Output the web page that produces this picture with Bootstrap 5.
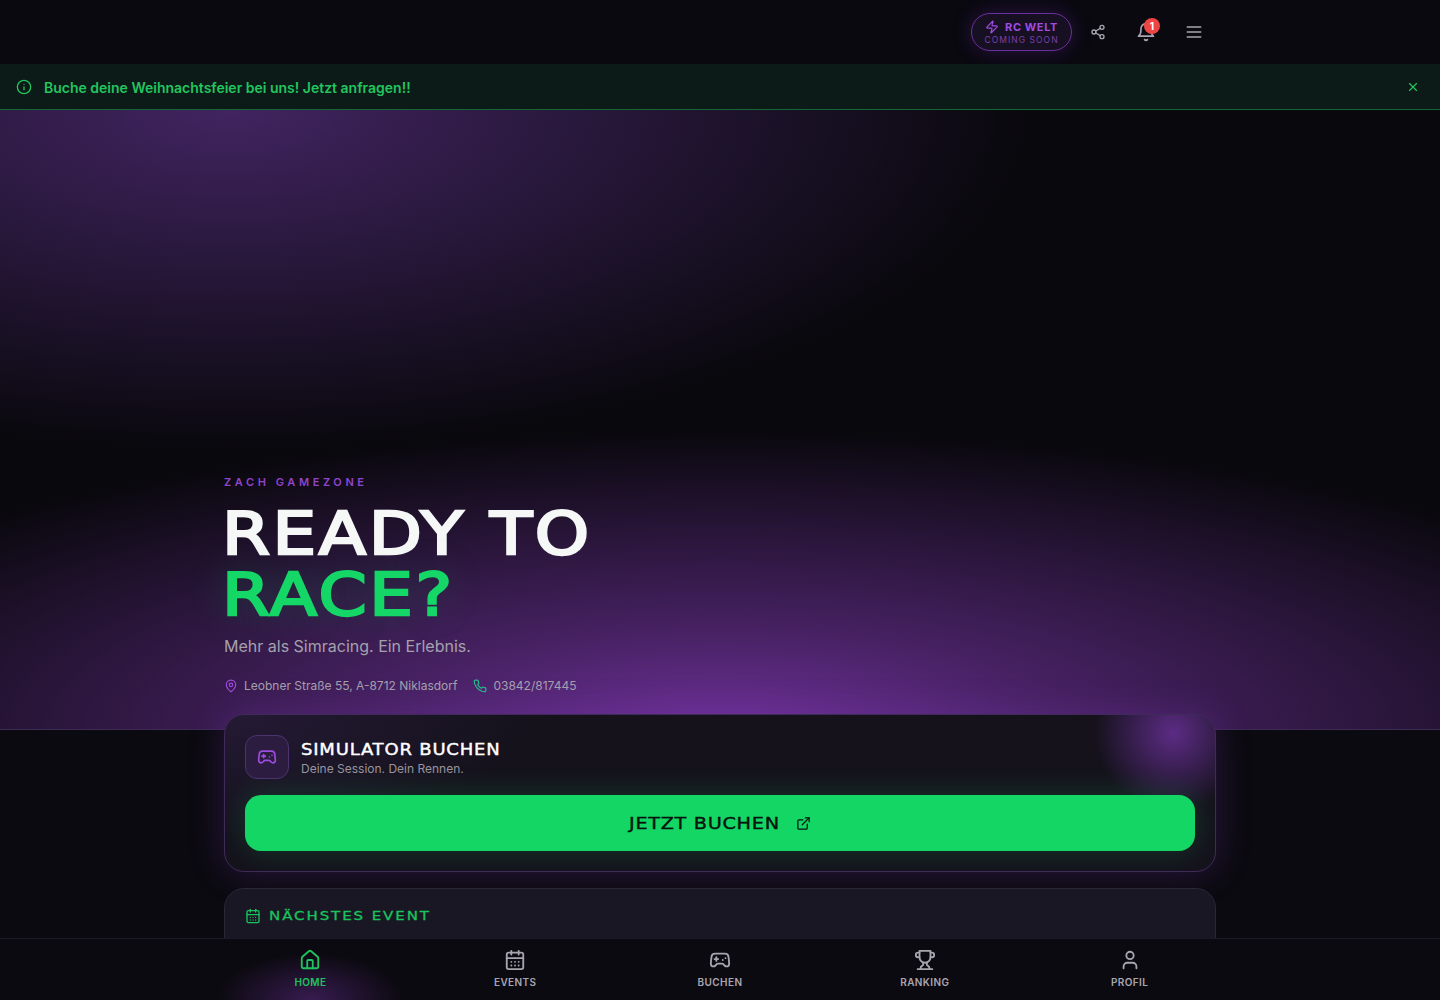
<!DOCTYPE html>
<html lang="de">
<head>
    <meta charset="UTF-8">
    <meta name="viewport" content="width=device-width, initial-scale=1.0">
    <title>Zach Gamezone</title>
    <link href="https://cdn.jsdelivr.net/npm/bootstrap@5.3.3/dist/css/bootstrap.min.css" rel="stylesheet">
    <style>
        body {
            font-family: "Inter", "Liberation Sans", sans-serif;
            background-color: #0b0a10;
            color: #fff;
            height: 100vh;
            overflow: hidden;
        }
        .ico {
            fill: none;
            stroke: currentColor;
            stroke-width: 2;
            stroke-linecap: round;
            stroke-linejoin: round;
            flex-shrink: 0;
        }
        /* wide techno look: no such font here, so DejaVu gets stretched */
        .display-face {
            font-family: "DejaVu Sans", "Liberation Sans", sans-serif;
            font-weight: 400;
            transform-origin: left center;
        }
        .wrap {
            width: 992px;
            margin: 0 auto;
        }
        .top-bar {
            height: 64px;
            background-color: #09090f;
        }
        .rc-pill {
            width: 101px;
            height: 38px;
            margin-right: 6px;
            padding-top: 1px;
            border: 1px solid #6a2f9c;
            border-radius: 19px;
            background-color: #171023;
            box-shadow: 0 0 20px rgba(147, 51, 234, .25);
            line-height: 1;
        }
        .rc-head {
            gap: 6px;
        }
        .rc-zap {
            color: #a04be0;
        }
        .rc-title {
            color: #a04be0;
            font-size: 11px;
            font-weight: 700;
            letter-spacing: .6px;
        }
        .rc-sub {
            color: #7b41ad;
            font-size: 8.5px;
            letter-spacing: 1.05px;
            margin-top: 2px;
        }
        .top-btn {
            width: 40px;
            height: 40px;
            color: #a8a5b0;
            background: none;
            border: 0;
            padding: 0;
        }
        .top-actions {
            padding-right: 2px;
        }
        .bell-count {
            top: 6px;
            right: 6px;
            width: 16px;
            height: 16px;
            font-size: 10px;
            font-weight: 700;
            line-height: 16px;
            background-color: #ef4444;
            color: #fff;
            border-radius: 50%;
            text-align: center;
        }
        .promo-bar {
            height: 46px;
            padding: 0 16px;
            background-color: #0c1a18;
            border-bottom: 1px solid #166534;
            color: #22c55e;
            font-size: 14px;
            font-weight: 600;
        }
        .promo-lead {
            gap: 12px;
        }
        .promo-text {
            padding-top: 1px;
        }
        .promo-close {
            background: none;
            border: 0;
            padding: 0;
            color: #22c55e;
            margin-right: 4px;
        }
        .page-body {
            min-height: 0;
            overflow: hidden;
        }
        .hero-zone {
            height: 620px;
            padding-bottom: 34px;
            background:
                radial-gradient(ellipse 800px 340px at 230px 0, #412460 0%, rgba(65, 36, 96, .6) 40%, rgba(65, 36, 96, 0) 100%),
                radial-gradient(ellipse 1050px 300px at 720px 620px, #6d3198 0%, rgba(109, 49, 152, .6) 35%, rgba(109, 49, 152, 0) 100%),
                #09080d;
            border-bottom: 1px solid #3d2a55;
        }
        .hero-eyebrow {
            color: #8f44cc;
            font-size: 11px;
            font-weight: 600;
            letter-spacing: 3.6px;
            line-height: 14px;
            margin-bottom: 15px;
        }
        .hero-title {
            font-size: 58px;
            line-height: 61px;
            letter-spacing: 2.2px;
            margin: 0 0 8px -2px;
            color: #f6f8f7;
            -webkit-text-stroke: 2.4px currentColor;
            transform: scaleX(1.19);
        }
        .hero-title span {
            display: block;
            color: #15d767;
            text-shadow: 0 0 36px rgba(21, 215, 103, .28);
        }
        .hero-lead {
            color: #a5a1ae;
            font-size: 16px;
            line-height: 24px;
            margin-bottom: 19px;
        }
        .hero-meta {
            color: #a5a1ae;
            font-size: 12px;
            line-height: 18px;
        }
        .meta-item {
            gap: 6px;
        }
        .meta-list {
            gap: 16px;
        }
        .pin-ico {
            color: #a04be0;
        }
        .phone-ico {
            color: #22c08a;
        }
        .booking-card {
            height: 158px;
            margin-top: -16px;
            padding: 20px;
            border: 1px solid #3f2b59;
            border-radius: 20px;
            background-color: #15121c;
            background-image:
                radial-gradient(circle 78px at 948px 18px, rgba(116, 52, 168, .75), rgba(116, 52, 168, 0)),
                radial-gradient(ellipse 300px 120px at 0 0, rgba(60, 38, 90, .4), rgba(60, 38, 90, 0));
            box-shadow: 0 0 34px rgba(116, 52, 168, .32);
            overflow: hidden;
        }
        .icon-tile {
            width: 44px;
            height: 44px;
            border: 1px solid #4c3470;
            border-radius: 12px;
            background-color: #2b1c40;
            color: #9d4ce0;
        }
        .tile-text {
            padding-top: 4px;
        }
        .booking-title {
            font-size: 15px;
            letter-spacing: .67px;
            line-height: 20px;
            color: #fff;
            -webkit-text-stroke: .4px currentColor;
            transform: scaleX(1.2);
            white-space: nowrap;
        }
        .booking-sub {
            color: #98949f;
            font-size: 12px;
            line-height: 18px;
        }
        .book-btn {
            height: 56px;
            border: 0;
            border-radius: 16px;
            background-color: #13d664;
            color: #07140c;
            box-shadow: 0 0 30px rgba(20, 215, 101, .2);
            gap: 17px;
        }
        .book-label {
            display: inline-block;
            font-size: 16px;
            letter-spacing: .6px;
            padding-top: 2px;
            -webkit-text-stroke: .4px currentColor;
            transform: scaleX(1.2);
            margin-right: 25px;
        }
        .event-card {
            height: 100px;
            margin-top: 16px;
            padding: 18px 20px;
            border: 1px solid #2b2638;
            border-radius: 20px;
            background-color: #1a1724;
            color: #18c45e;
        }
        .event-label {
            display: inline-block;
            font-size: 12.5px;
            letter-spacing: 1.6px;
            -webkit-text-stroke: .3px currentColor;
            transform: scaleX(1.2);
            white-space: nowrap;
        }
        .bottom-bar {
            height: 62px;
            background-color: #0c0a11;
            border-top: 1px solid #1c1a26;
        }
        .bottom-grid {
            width: 1024px;
            margin: 0 auto;
        }
        .tab-link {
            flex: 1 1 0;
            color: #a8a5b0;
            font-size: 10px;
            font-weight: 600;
            letter-spacing: .4px;
            text-decoration: none;
            padding-top: 10px;
        }
        .tab-link.is-active {
            color: #1fc45f;
            background: radial-gradient(ellipse 92px 46px at 50% 100%, rgba(116, 52, 168, .42), rgba(116, 52, 168, 0));
        }
        .tab-link span {
            margin-top: 4px;
        }
    </style>
</head>
<body class="d-flex flex-column">
    <svg width="0" height="0" class="position-absolute">
        <symbol id="i-zap" viewBox="0 0 24 24"><path d="M4 14a1 1 0 0 1-.78-1.63l9.9-10.2a.5.5 0 0 1 .86.46l-1.92 6.02A1 1 0 0 0 13 10h7a1 1 0 0 1 .78 1.63l-9.9 10.2a.5.5 0 0 1-.86-.46l1.92-6.02A1 1 0 0 0 11 14z"/></symbol>
        <symbol id="i-share" viewBox="0 0 24 24"><circle cx="18" cy="5" r="3"/><circle cx="6" cy="12" r="3"/><circle cx="18" cy="19" r="3"/><line x1="8.59" x2="15.42" y1="13.51" y2="17.49"/><line x1="15.41" x2="8.59" y1="6.51" y2="10.49"/></symbol>
        <symbol id="i-bell" viewBox="0 0 24 24"><path d="M6 8a6 6 0 0 1 12 0c0 7 3 9 3 9H3s3-2 3-9"/><path d="M10.3 21a1.94 1.94 0 0 0 3.4 0"/></symbol>
        <symbol id="i-menu" viewBox="0 0 24 24"><line x1="4" x2="20" y1="12" y2="12"/><line x1="4" x2="20" y1="6" y2="6"/><line x1="4" x2="20" y1="18" y2="18"/></symbol>
        <symbol id="i-info" viewBox="0 0 24 24"><circle cx="12" cy="12" r="10"/><path d="M12 16v-4"/><path d="M12 8h.01"/></symbol>
        <symbol id="i-x" viewBox="0 0 24 24"><path d="M18 6 6 18"/><path d="m6 6 12 12"/></symbol>
        <symbol id="i-pin" viewBox="0 0 24 24"><path d="M20 10c0 6-8 12-8 12s-8-6-8-12a8 8 0 0 1 16 0Z"/><circle cx="12" cy="10" r="3"/></symbol>
        <symbol id="i-phone" viewBox="0 0 24 24"><path d="M22 16.92v3a2 2 0 0 1-2.18 2 19.79 19.79 0 0 1-8.63-3.07 19.5 19.5 0 0 1-6-6 19.79 19.79 0 0 1-3.07-8.67A2 2 0 0 1 4.11 2h3a2 2 0 0 1 2 1.72 12.84 12.84 0 0 0 .7 2.81 2 2 0 0 1-.45 2.11L8.09 9.91a16 16 0 0 0 6 6l1.27-1.27a2 2 0 0 1 2.11-.45 12.84 12.84 0 0 0 2.81.7A2 2 0 0 1 22 16.92z"/></symbol>
        <symbol id="i-pad" viewBox="0 0 24 24"><line x1="6" x2="10" y1="11" y2="11"/><line x1="8" x2="8" y1="9" y2="13"/><line x1="15" x2="15.01" y1="12" y2="12"/><line x1="18" x2="18.01" y1="10" y2="10"/><path d="M17.32 5H6.68a4 4 0 0 0-3.978 3.59c-.006.052-.01.101-.017.152C2.604 9.416 2 14.456 2 16a3 3 0 0 0 3 3c1 0 1.5-.5 2-1l1.414-1.414A2 2 0 0 1 9.828 16h4.344a2 2 0 0 1 1.414.586L17 18c.5.5 1 1 2 1a3 3 0 0 0 3-3c0-1.545-.604-6.584-.685-7.258-.007-.05-.011-.1-.017-.151A4 4 0 0 0 17.32 5z"/></symbol>
        <symbol id="i-ext" viewBox="0 0 24 24"><path d="M15 3h6v6"/><path d="M10 14 21 3"/><path d="M18 13v6a2 2 0 0 1-2 2H5a2 2 0 0 1-2-2V8a2 2 0 0 1 2-2h6"/></symbol>
        <symbol id="i-cal" viewBox="0 0 24 24"><path d="M8 2v4"/><path d="M16 2v4"/><rect width="18" height="18" x="3" y="4" rx="2"/><path d="M3 10h18"/><path d="M8 14h.01"/><path d="M12 14h.01"/><path d="M16 14h.01"/><path d="M8 18h.01"/><path d="M12 18h.01"/><path d="M16 18h.01"/></symbol>
        <symbol id="i-house" viewBox="0 0 24 24"><path d="M15 21v-8a1 1 0 0 0-1-1h-4a1 1 0 0 0-1 1v8"/><path d="M3 10a2 2 0 0 1 .709-1.528l7-5.999a2 2 0 0 1 2.582 0l7 5.999A2 2 0 0 1 21 10v9a2 2 0 0 1-2 2H5a2 2 0 0 1-2-2z"/></symbol>
        <symbol id="i-trophy" viewBox="0 0 24 24"><path d="M6 9H4.5a2.5 2.5 0 0 1 0-5H6"/><path d="M18 9h1.5a2.5 2.5 0 0 0 0-5H18"/><path d="M4 22h16"/><path d="M10 14.66V17c0 .55-.47.98-.97 1.21C7.85 18.75 7 20.24 7 22"/><path d="M14 14.66V17c0 .55.47.98.97 1.21C16.15 18.75 17 20.24 17 22"/><path d="M18 2H6v7a6 6 0 0 0 12 0V2Z"/></symbol>
        <symbol id="i-user" viewBox="0 0 24 24"><path d="M19 21v-2a4 4 0 0 0-4-4H9a4 4 0 0 0-4 4v2"/><circle cx="12" cy="7" r="4"/></symbol>
    </svg>

    <!-- Header -->
    <header class="top-bar flex-shrink-0">
        <div class="wrap h-100 d-flex align-items-center justify-content-end">
            <a href="#" class="rc-pill d-flex flex-column align-items-center justify-content-center text-decoration-none">
                <div class="rc-head d-flex align-items-center">
                    <svg class="ico rc-zap" width="14" height="14"><use href="#i-zap"/></svg>
                    <span class="rc-title">RC WELT</span>
                </div>
                <div class="rc-sub">COMING SOON</div>
            </a>
            <div class="top-actions d-flex gap-2">
                <button class="top-btn d-flex align-items-center justify-content-center" type="button" aria-label="Teilen"><svg class="ico" width="16" height="16"><use href="#i-share"/></svg></button>
                <button class="top-btn d-flex align-items-center justify-content-center position-relative" type="button" aria-label="Benachrichtigungen">
                    <svg class="ico" width="20" height="20"><use href="#i-bell"/></svg>
                    <span class="bell-count position-absolute">1</span>
                </button>
                <button class="top-btn d-flex align-items-center justify-content-center" type="button" aria-label="Menü"><svg class="ico" width="20" height="20"><use href="#i-menu"/></svg></button>
            </div>
        </div>
    </header>

    <!-- Promo -->
    <div class="promo-bar flex-shrink-0 d-flex align-items-center justify-content-between">
        <div class="promo-lead d-flex align-items-center">
            <svg class="ico" width="16" height="16"><use href="#i-info"/></svg>
            <span class="promo-text">Buche deine Weihnachtsfeier bei uns! Jetzt anfragen!!</span>
        </div>
        <button class="promo-close d-flex" type="button" aria-label="Schließen"><svg class="ico" width="14" height="14"><use href="#i-x"/></svg></button>
    </div>

    <main class="page-body flex-grow-1">
        <section class="hero-zone d-flex flex-column justify-content-end">
            <div class="wrap">
                <div class="hero-eyebrow">ZACH GAMEZONE</div>
                <h1 class="hero-title display-face">READY TO<span>RACE?</span></h1>
                <p class="hero-lead">Mehr als Simracing. Ein Erlebnis.</p>
                <div class="hero-meta meta-list d-flex align-items-center">
                    <div class="meta-item d-flex align-items-center">
                        <svg class="ico pin-ico" width="14" height="14"><use href="#i-pin"/></svg>
                        <span>Leobner Straße 55, A-8712 Niklasdorf</span>
                    </div>
                    <div class="meta-item d-flex align-items-center">
                        <svg class="ico phone-ico" width="14" height="14"><use href="#i-phone"/></svg>
                        <span>03842/817445</span>
                    </div>
                </div>
            </div>
        </section>

        <div class="wrap position-relative">
            <div class="booking-card">
                <div class="d-flex align-items-center gap-2 mb-3">
                    <div class="icon-tile d-flex align-items-center justify-content-center me-1">
                        <svg class="ico" width="20" height="20"><use href="#i-pad"/></svg>
                    </div>
                    <div class="tile-text">
                        <div class="booking-title display-face">SIMULATOR BUCHEN</div>
                        <div class="booking-sub">Deine Session. Dein Rennen.</div>
                    </div>
                </div>
                <button class="book-btn w-100 d-flex align-items-center justify-content-center" type="button">
                    <span class="book-label display-face">JETZT BUCHEN</span>
                    <svg class="ico" width="15" height="15"><use href="#i-ext"/></svg>
                </button>
            </div>

            <div class="event-card">
                <div class="d-flex align-items-center gap-2">
                    <svg class="ico" width="16" height="16"><use href="#i-cal"/></svg>
                    <span class="event-label display-face">NÄCHSTES EVENT</span>
                </div>
            </div>
        </div>
    </main>

    <!-- Bottom navigation -->
    <nav class="bottom-bar flex-shrink-0">
        <div class="bottom-grid h-100 d-flex">
            <a href="#" class="tab-link is-active d-flex flex-column align-items-center">
                <svg class="ico" width="22" height="22"><use href="#i-house"/></svg><span>HOME</span>
            </a>
            <a href="#" class="tab-link d-flex flex-column align-items-center">
                <svg class="ico" width="22" height="22"><use href="#i-cal"/></svg><span>EVENTS</span>
            </a>
            <a href="#" class="tab-link d-flex flex-column align-items-center">
                <svg class="ico" width="22" height="22"><use href="#i-pad"/></svg><span>BUCHEN</span>
            </a>
            <a href="#" class="tab-link d-flex flex-column align-items-center">
                <svg class="ico" width="22" height="22"><use href="#i-trophy"/></svg><span>RANKING</span>
            </a>
            <a href="#" class="tab-link d-flex flex-column align-items-center">
                <svg class="ico" width="22" height="22"><use href="#i-user"/></svg><span>PROFIL</span>
            </a>
        </div>
    </nav>

    <script src="https://cdn.jsdelivr.net/npm/bootstrap@5.3.3/dist/js/bootstrap.bundle.min.js"></script>
</body>
</html>
